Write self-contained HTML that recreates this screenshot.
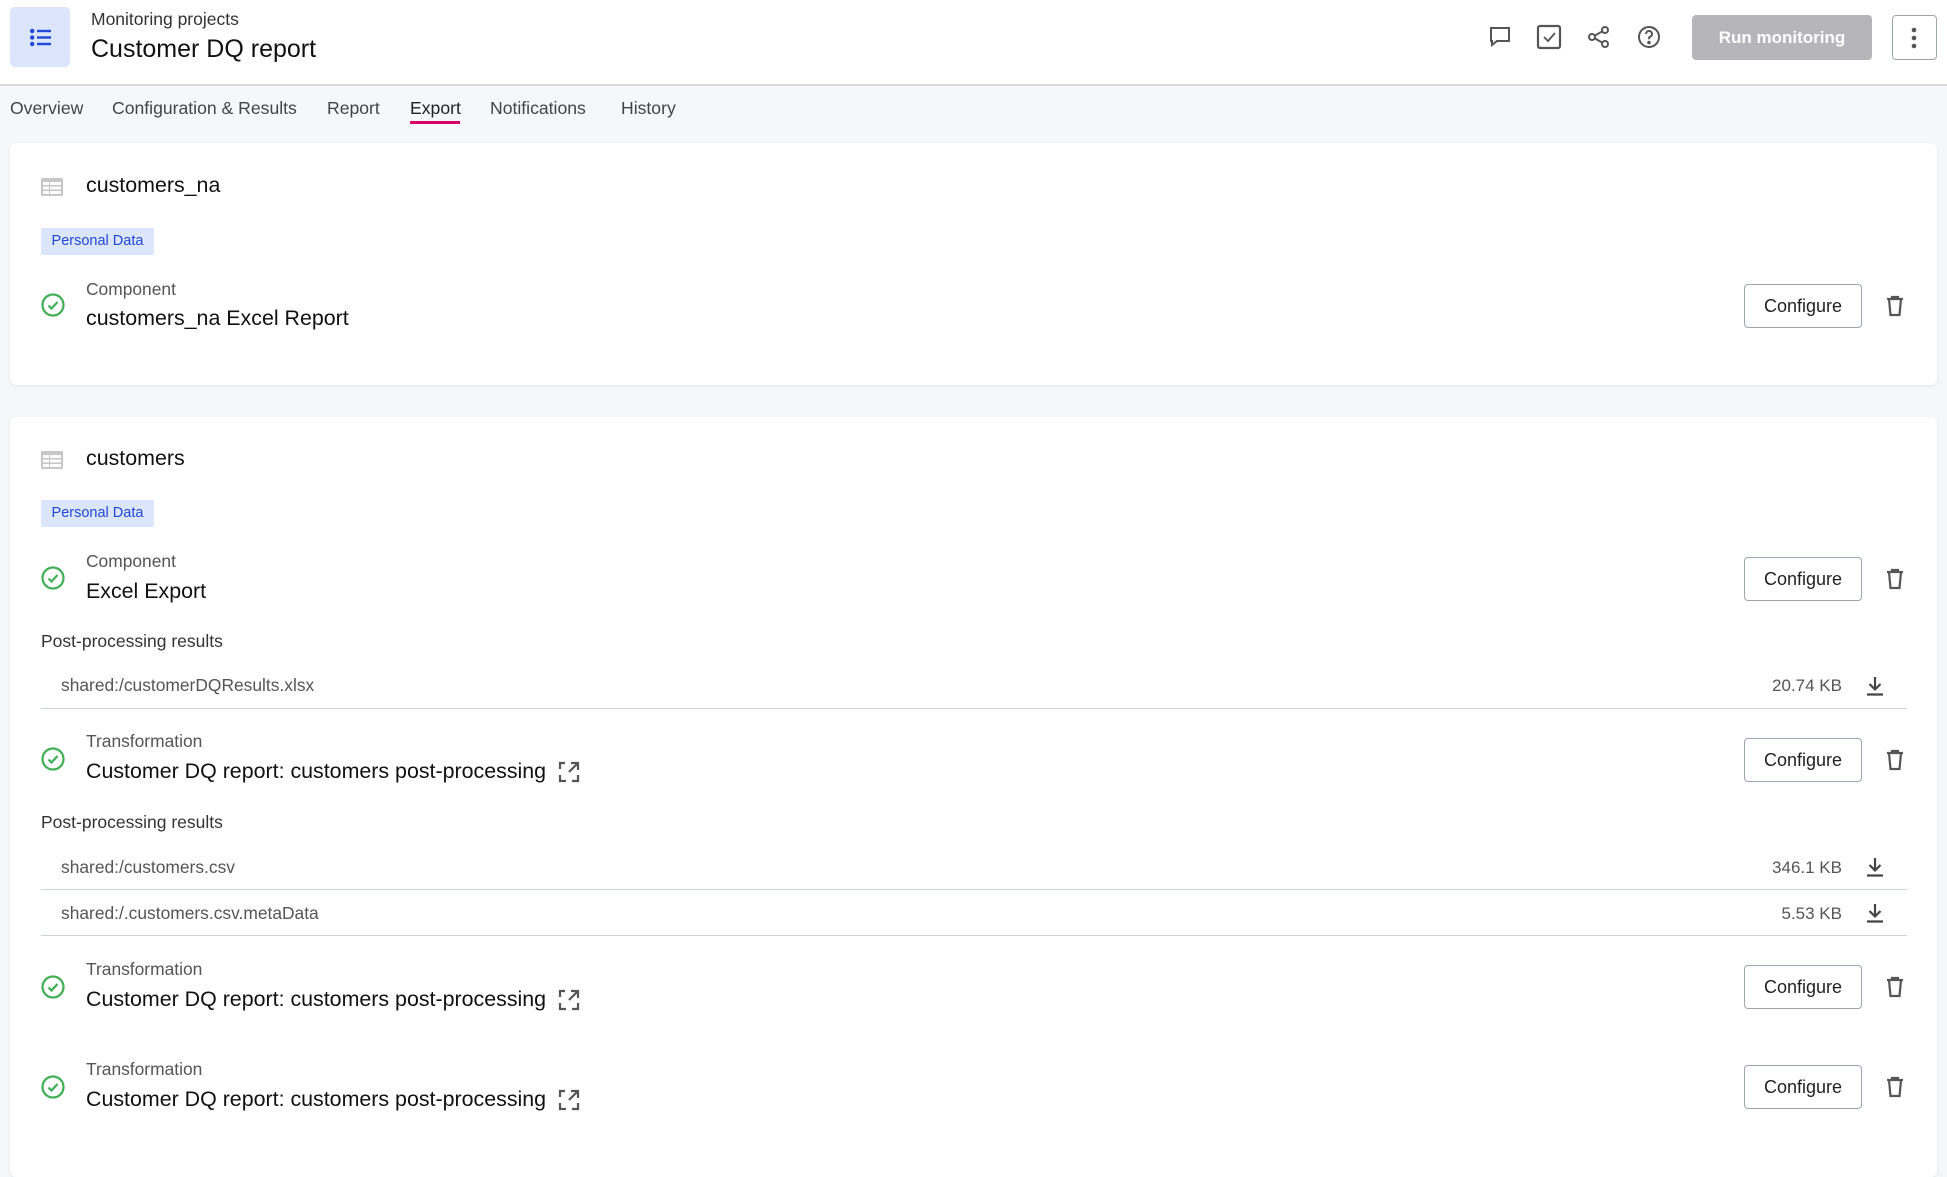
<!DOCTYPE html>
<html><head><meta charset="utf-8"><style>
*{margin:0;padding:0;box-sizing:border-box}
body{width:1947px;height:1143px;overflow:hidden;background:#f5f7f9;font-family:"Liberation Sans",sans-serif;color:#222;position:relative}
.a{position:absolute;white-space:nowrap}
.hdr{position:absolute;left:0;top:0;width:1947px;height:86px;background:#fff;border-bottom:2px solid #d3dae0}
.card{position:absolute;left:10px;width:1927px;background:#fff;border-radius:6px;box-shadow:0 1px 3px rgba(0,0,0,.08)}
.tab{font-size:17.6px;color:#444;top:98px}
.lbl{font-size:17.4px;color:#555}
.nm{font-size:21.4px;color:#111}
.badge{position:absolute;left:41px;width:113px;height:27px;background:#dbe5fb;color:#2148d6;font-size:14.5px;line-height:27px;text-align:center;border-radius:2px}
.btn{position:absolute;left:1744px;width:118px;height:44px;border:1px solid #9aa5b1;border-radius:4px;font-size:18px;line-height:42px;text-align:center;color:#222;background:#fff}
.line{position:absolute;left:41px;width:1866px;height:1px;background:#ccd3da}
.file{font-size:17.4px;color:#555}
.size{font-size:17px;color:#555;text-align:right;width:120px;left:1722px}
.sec{font-size:17.5px;color:#333;left:41px}
</style></head><body>
<div class="hdr"></div>
<div class="a" style="left:10px;top:7px;width:60px;height:60px;background:#dbe5fb;border-radius:5px"></div>
<svg class="a" style="left:30px;top:28px" width="21" height="19" viewBox="0 0 21 19" fill="#2148d6"><circle cx="2.2" cy="3" r="2.2"/><circle cx="2.2" cy="9.5" r="2.2"/><circle cx="2.2" cy="16" r="2.2"/><rect x="7" y="1.8" width="14" height="2.4"/><rect x="7" y="8.3" width="14" height="2.4"/><rect x="7" y="14.8" width="14" height="2.4"/></svg>
<div class="a" style="left:91px;top:9px;font-size:17.5px;color:#333">Monitoring projects</div>
<div class="a" style="left:91px;top:35px;font-size:25px;color:#111">Customer DQ report</div>
<svg class="a" style="left:1488px;top:25px" width="24" height="24" viewBox="0 0 24 24" fill="none" stroke="#555" stroke-width="2"><path d="M3 3h18v13H9l-5 4v-4H3z"/></svg>
<svg class="a" style="left:1536px;top:24px" width="26" height="26" viewBox="0 0 26 26" fill="none" stroke="#555" stroke-width="2.2"><rect x="2" y="2" width="22" height="22" rx="2"/><path d="M8 13l4 4 7-8" stroke-width="1.8"/></svg>
<svg class="a" style="left:1588px;top:26px" width="22" height="22" viewBox="0 0 22 22" fill="none" stroke="#555" stroke-width="2"><circle cx="4" cy="11" r="3"/><circle cx="17" cy="4" r="3"/><circle cx="17" cy="18" r="3"/><path d="M7 9.5l7-4M7 12.5l7 4"/></svg>
<svg class="a" style="left:1637px;top:25px" width="24" height="24" viewBox="0 0 24 24" fill="none" stroke="#555" stroke-width="2"><circle cx="12" cy="12" r="10"/><path d="M9 9a3 3 0 1 1 4 2.8c-.8.4-1 1-1 2v.5"/><circle cx="12" cy="17.5" r=".8" fill="#555"/></svg>
<div class="a" style="left:1692px;top:15px;width:180px;height:45px;background:#b6b6ba;border-radius:4px;color:#fff;font-size:17px;font-weight:bold;line-height:45px;text-align:center">Run monitoring</div>
<div class="a" style="left:1892px;top:15px;width:45px;height:45px;border:1px solid #9aa5b1;border-radius:4px;background:#fff"></div>
<svg class="a" style="left:1910px;top:27px" width="8" height="22" viewBox="0 0 8 22" fill="#555"><circle cx="4" cy="3" r="2.3"/><circle cx="4" cy="11" r="2.3"/><circle cx="4" cy="19" r="2.3"/></svg>

<div class="a tab" style="left:10px">Overview</div>
<div class="a tab" style="left:112px">Configuration &amp; Results</div>
<div class="a tab" style="left:327px">Report</div>
<div class="a tab" style="left:410px;color:#222">Export</div>
<div class="a" style="left:410px;top:121px;width:50px;height:3px;background:#d6006d"></div>
<div class="a tab" style="left:490px">Notifications</div>
<div class="a tab" style="left:621px">History</div>

<div class="card" style="top:143px;height:242px"></div>
<div class="card" style="top:417px;height:760px"></div>

<svg class="a" style="left:41px;top:178px" width="22" height="18" viewBox="0 0 22 18" fill="#c6c6c6"><rect width="22" height="18" rx="1"/><g fill="#fff"><rect x="2" y="4" width="6" height="3"/><rect x="9" y="4" width="11" height="3"/><rect x="2" y="8.5" width="6" height="3"/><rect x="9" y="8.5" width="11" height="3"/><rect x="2" y="13" width="6" height="3"/><rect x="9" y="13" width="11" height="3"/></g></svg>
<div class="a nm" style="left:86px;top:173px">customers_na</div>
<div class="badge" style="top:228px">Personal Data</div>

<svg class="a" style="left:41px;top:293px" width="24" height="24" viewBox="0 0 24 24" fill="none" stroke="#3fae55" stroke-width="2.2"><circle cx="12" cy="12" r="10.5"/><path d="M7.5 12.5l3 3 6-6.5"/></svg>
<div class="a lbl" style="left:86px;top:279px">Component</div>
<div class="a nm" style="left:86px;top:306px">customers_na Excel Report</div>
<div class="btn" style="top:284px">Configure</div>

<svg class="a" style="left:41px;top:451px" width="22" height="18" viewBox="0 0 22 18" fill="#c6c6c6"><rect width="22" height="18" rx="1"/><g fill="#fff"><rect x="2" y="4" width="6" height="3"/><rect x="9" y="4" width="11" height="3"/><rect x="2" y="8.5" width="6" height="3"/><rect x="9" y="8.5" width="11" height="3"/><rect x="2" y="13" width="6" height="3"/><rect x="9" y="13" width="11" height="3"/></g></svg>
<div class="a nm" style="left:86px;top:446px">customers</div>
<div class="badge" style="top:500px">Personal Data</div>

<svg class="a" style="left:41px;top:566px" width="24" height="24" viewBox="0 0 24 24" fill="none" stroke="#3fae55" stroke-width="2.2"><circle cx="12" cy="12" r="10.5"/><path d="M7.5 12.5l3 3 6-6.5"/></svg>
<div class="a lbl" style="left:86px;top:551px">Component</div>
<div class="a nm" style="left:86px;top:579px">Excel Export</div>
<div class="btn" style="top:557px">Configure</div>

<div class="a sec" style="top:631px">Post-processing results</div>
<div class="a file" style="left:61px;top:675px">shared:/customerDQResults.xlsx</div>
<div class="a size" style="top:676px">20.74 KB</div>
<div class="line" style="top:708px"></div>

<svg class="a" style="left:41px;top:747px" width="24" height="24" viewBox="0 0 24 24" fill="none" stroke="#3fae55" stroke-width="2.2"><circle cx="12" cy="12" r="10.5"/><path d="M7.5 12.5l3 3 6-6.5"/></svg>
<div class="a lbl" style="left:86px;top:731px">Transformation</div>
<div class="a nm" style="left:86px;top:759px">Customer DQ report: customers post-processing</div>
<div class="btn" style="top:738px">Configure</div>

<div class="a sec" style="top:812px">Post-processing results</div>
<div class="a file" style="left:61px;top:857px">shared:/customers.csv</div>
<div class="a size" style="top:858px">346.1 KB</div>
<div class="line" style="top:889px"></div>
<div class="a file" style="left:61px;top:903px">shared:/.customers.csv.metaData</div>
<div class="a size" style="top:904px">5.53 KB</div>
<div class="line" style="top:935px"></div>

<svg class="a" style="left:41px;top:975px" width="24" height="24" viewBox="0 0 24 24" fill="none" stroke="#3fae55" stroke-width="2.2"><circle cx="12" cy="12" r="10.5"/><path d="M7.5 12.5l3 3 6-6.5"/></svg>
<div class="a lbl" style="left:86px;top:959px">Transformation</div>
<div class="a nm" style="left:86px;top:987px">Customer DQ report: customers post-processing</div>
<div class="btn" style="top:965px">Configure</div>

<svg class="a" style="left:41px;top:1075px" width="24" height="24" viewBox="0 0 24 24" fill="none" stroke="#3fae55" stroke-width="2.2"><circle cx="12" cy="12" r="10.5"/><path d="M7.5 12.5l3 3 6-6.5"/></svg>
<div class="a lbl" style="left:86px;top:1059px">Transformation</div>
<div class="a nm" style="left:86px;top:1087px">Customer DQ report: customers post-processing</div>
<div class="btn" style="top:1065px">Configure</div>

<svg class="a" style="left:1886px;top:295px" width="18" height="22" viewBox="0 0 18 22" fill="none" stroke="#555" stroke-width="2.2"><path d="M1 4h16M6 4V2h6v2M3 4l1.5 16h9L15 4"/></svg>
<svg class="a" style="left:1886px;top:568px" width="18" height="22" viewBox="0 0 18 22" fill="none" stroke="#555" stroke-width="2.2"><path d="M1 4h16M6 4V2h6v2M3 4l1.5 16h9L15 4"/></svg>
<svg class="a" style="left:1886px;top:749px" width="18" height="22" viewBox="0 0 18 22" fill="none" stroke="#555" stroke-width="2.2"><path d="M1 4h16M6 4V2h6v2M3 4l1.5 16h9L15 4"/></svg>
<svg class="a" style="left:1886px;top:976px" width="18" height="22" viewBox="0 0 18 22" fill="none" stroke="#555" stroke-width="2.2"><path d="M1 4h16M6 4V2h6v2M3 4l1.5 16h9L15 4"/></svg>
<svg class="a" style="left:1886px;top:1076px" width="18" height="22" viewBox="0 0 18 22" fill="none" stroke="#555" stroke-width="2.2"><path d="M1 4h16M6 4V2h6v2M3 4l1.5 16h9L15 4"/></svg>

<svg class="a" style="left:1866px;top:676px" width="18" height="20" viewBox="0 0 18 20" fill="none" stroke="#444" stroke-width="2.2"><path d="M9 1v12M3.5 8l5.5 5.5L14.5 8M1 18.5h16"/></svg>
<svg class="a" style="left:1866px;top:857px" width="18" height="20" viewBox="0 0 18 20" fill="none" stroke="#444" stroke-width="2.2"><path d="M9 1v12M3.5 8l5.5 5.5L14.5 8M1 18.5h16"/></svg>
<svg class="a" style="left:1866px;top:903px" width="18" height="20" viewBox="0 0 18 20" fill="none" stroke="#444" stroke-width="2.2"><path d="M9 1v12M3.5 8l5.5 5.5L14.5 8M1 18.5h16"/></svg>

<svg class="a" style="left:558px;top:761px" width="22" height="22" viewBox="0 0 22 22" fill="none" stroke="#555" stroke-width="2.2"><path d="M13 2h7v7M20 2l-9 9M2 8V2h5M2 14v6h6M14 20h6v-6"/></svg>
<svg class="a" style="left:558px;top:989px" width="22" height="22" viewBox="0 0 22 22" fill="none" stroke="#555" stroke-width="2.2"><path d="M13 2h7v7M20 2l-9 9M2 8V2h5M2 14v6h6M14 20h6v-6"/></svg>
<svg class="a" style="left:558px;top:1089px" width="22" height="22" viewBox="0 0 22 22" fill="none" stroke="#555" stroke-width="2.2"><path d="M13 2h7v7M20 2l-9 9M2 8V2h5M2 14v6h6M14 20h6v-6"/></svg>
</body></html>
